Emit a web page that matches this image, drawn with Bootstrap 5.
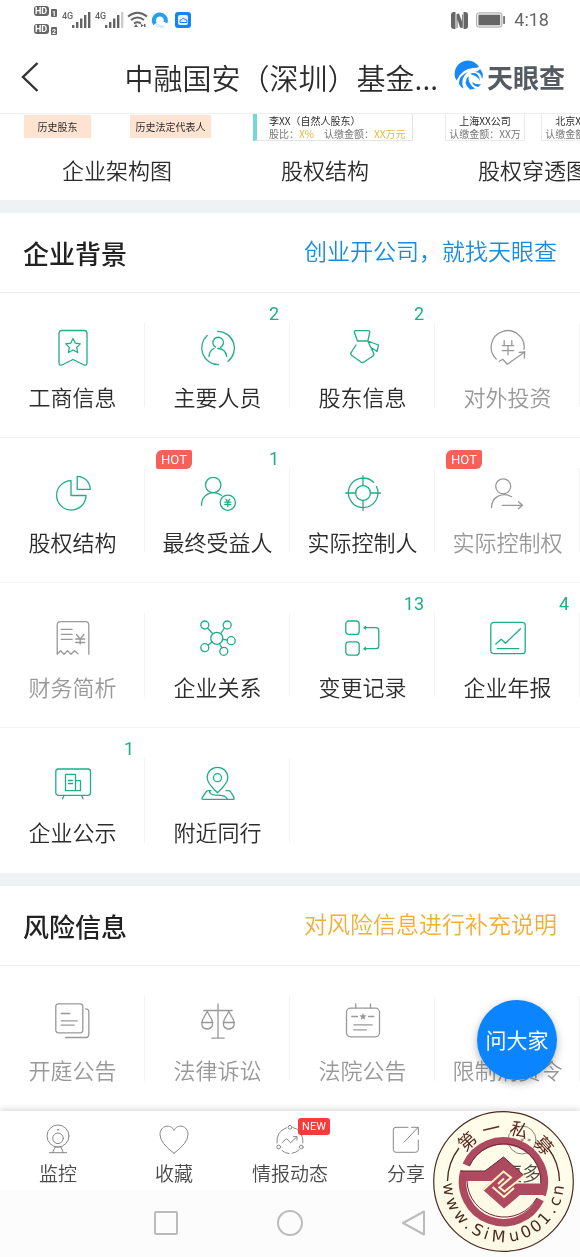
<!DOCTYPE html>
<html lang="zh-CN">
<head>
<meta charset="utf-8">
<meta name="viewport" content="width=device-width, initial-scale=1">
<title>天眼查 - 中融国安（深圳）基金</title>
<link href="https://cdn.jsdelivr.net/npm/bootstrap@5.3.0/dist/css/bootstrap.min.css" rel="stylesheet">
<style>
  body { font-family: "Noto Sans CJK SC", "Noto Sans", sans-serif; font-weight: 350; color: #2c2c2c; background: #fff; overflow-x: hidden; }
  a { color: inherit; text-decoration: none; }
  svg { display: block; flex: none; overflow: visible; }
  .ln { fill: none; stroke: currentColor; stroke-width: 1.3; stroke-linecap: round; stroke-linejoin: round; }
  .thin { stroke-width: 1; }
  .status-bar { height: 40px; padding: 0 31px 0 32px; color: #666; font-family: Roboto, sans-serif; }
  .clock { font-size: 18px; line-height: 24px; font-weight: 400; }
  .app-bar { height: 73px; padding: 0 15px 0 18px; }
  .app-title { font-size: 29px; line-height: 40px; font-weight: 350; margin-right: 18px; }
  .brand-name { font-size: 26px; line-height: 36px; font-weight: 700; color: #555b63; }
  .peek { height: 87px; border-top: 1px solid #eee; padding-left: 13px; }
  .peek-item { flex: 0 0 208px; }
  .peek-art { height: 27px; font-size: 10px; line-height: 13px; font-weight: 400; white-space: nowrap; overflow: hidden; }
  .tags { padding: 1px 10px 0 11px; }
  .peek-tag { background: #fee3d3; line-height: 23px; height: 23px; text-align: center; }
  .tag-s { width: 67px; }
  .tag-l { width: 81px; }
  .holder { width: 160px; margin-left: 32px; border: 1px solid #e3e3e3; border-left: 4px solid #70d9d2; border-top: 0; padding-left: 12px; }
  .sub { color: #777; }
  .gold { color: #e4b83a; }
  .child { flex: 0 0 80px; border: 1px solid #eaeaea; border-top: 0; text-align: center; }
  .caption { font-size: 22px; line-height: 30px; margin-top: 13px; text-align: center; }
  .gap-bar { height: 13px; background: #eef2f5; }
  .sec-head { height: 80px; padding: 0 23px; border-bottom: 1px solid #eee; }
  .sec-head h2 { font-size: 26px; line-height: 36px; font-weight: 500; margin: 0; color: #222; }
  .sec-head a { font-size: 23px; line-height: 34px; padding-bottom: 6px; }
  .c-blue { color: #1a8ce0; }
  .c-amber { color: #f3ae35; }
  .tile { height: 145px; padding-top: 37px; color: #1eae88; border-bottom: 1px solid #f3f3f3; }
  .tile::after { content: ""; position: absolute; right: 0; top: 30px; bottom: 30px; border-right: 1px solid #f3f3f3; }
  .tile-name { font-size: 22px; line-height: 32px; margin-top: 14px; color: #2c2c2c; white-space: nowrap; }
  .tile.off, .tile.off .tile-name { color: #999; }
  .count { position: absolute; right: 11px; top: 9px; font: 400 18px/24px Roboto, sans-serif; }
  .hot { position: absolute; left: 11px; top: 12px; width: 36px; background: #f7605a; color: #fff; border-radius: 6px 2px; font: 400 13px/19px Roboto, sans-serif; text-align: center; }
  .last-row .tile { border-bottom: 0; }
  .ask { position: absolute; right: 23px; bottom: 31px; width: 80px; height: 80px; border: 0; padding: 0 0 2px; border-radius: 50%; background: #0a84ff; color: #fff; font-size: 21px; line-height: 30px; font-weight: 400; box-shadow: 0 3px 8px rgba(0,0,0,.3); }
  .tabs-bar { height: 79px; padding-top: 14px; background: #fff; box-shadow: 0 -2px 6px rgba(0,0,0,.14); }
  .tab { flex: 1 1 0; color: #888; }
  .tab-name { font-size: 19px; line-height: 28px; margin-top: 4px; color: #4a4a4a; white-space: nowrap; }
  .new { position: absolute; left: 50%; top: -7px; margin-left: 8px; width: 32px; background: #fb3b3b; color: #fff; border-radius: 3px; font: 400 11px/17px Roboto, sans-serif; text-align: center; }
  .sys-nav { height: 67px; padding-bottom: 2px; background: #fcfcfc; gap: 98px; color: #bbb; position: relative; }
  .sys-nav button { border: 0; background: none; padding: 0; color: inherit; }
  .seal, .seal-paper { position: absolute; right: 6px; top: 0; width: 141px; height: 141px; border-radius: 50%; pointer-events: none; }
  .seal-paper { background: #fffdea; mix-blend-mode: multiply; }
</style>
</head>
<body>
<svg width="0" height="0" class="position-absolute" aria-hidden="true">
  <defs>
    <g id="yen"><path d="M-3.8-7v5M3.8-7v5M-5.7-2H5.7M-5.7 3H5.7M0-2V7"/></g>
    <g id="yen-s"><path d="M-2-3.5l2 2.7 2-2.7M-3-.5h6M-3 1.8h6M0-.5v4.2"/></g>
  </defs>
</svg>

<div class="status-bar d-flex align-items-center justify-content-between">
  <svg width="162" height="30" viewBox="32 5 162 30" fill="#666" font-family="Roboto, sans-serif">
    <rect x="34" y="6" width="15" height="10" rx="3"/><rect x="34" y="24" width="15" height="10" rx="3"/>
    <g font-size="9" font-weight="700"><text x="35" y="14" fill="#fff">HD</text><text x="35" y="32" fill="#fff">HD</text></g>
    <rect x="51" y="9" width="6" height="8" rx="1"/><rect x="51" y="27" width="6" height="8" rx="1"/>
    <g font-size="7" font-weight="700"><text x="52" y="16" fill="#fff">1</text><text x="52" y="34" fill="#fff">2</text></g>
    <g font-size="9" font-weight="500"><text x="62" y="19">4G</text><text x="95" y="19">4G</text></g>
    <path d="M72 25h2.400v3H72zM76 22h2.400v6H76zM80 18.500h2.400V28H80zM84 15h2.400v13H84zM88 12h2.400v16H88z"/>
    <path d="M105 25h2.400v3H105zM109 22h2.400v6H109zM113 18.500h2.400V28H113zM117 15h2.400v13H117z"/><path fill="#ccc" d="M121 12h2.400v16H121z"/>
    <g fill="none" stroke="#666" stroke-width="2"><path d="M128 16.500q9.500-7.500 19 0M131 20q6.500-5 13 0M134 23.500q3.500-2.500 7 0"/></g><path d="M136 24l2 3h-4zM141 24l3 1.500-3 1.500zM144 24h1.500v3H144z"/>
    <path d="M155 24a6 6 0 1 1 10.500-1.500" fill="none" stroke="#259ff0" stroke-width="4"/><path d="M156 24q4 4 8 2" fill="none" stroke="#d8ecfa" stroke-width="3"/>
    <rect x="175" y="12" width="16" height="16" rx="3" fill="#1684f4"/><rect x="178" y="15" width="10" height="10" rx="2" fill="#e4f4ff"/><path d="M180 22.500q-1-3 2-3 1-3 3 0 3 0 2 3z" fill="none" stroke="#1684f4"/>
  </svg>
  <div class="d-flex align-items-center gap-2">
    <svg width="17" height="17" viewBox="0 0 17 17"><path fill="#666" d="M3 0h1.500v17H3q-3 0-3-3V3q0-3 3-3zM12.500 0H14q3 0 3 3v11q0 3-3 3h-1.500zM5.500 2L8 1.500l3 8V2.500l.8 0V16L9 15.500l-2.500-8V16l-1 0z"/></svg>
    <svg width="30" height="16" viewBox="0 0 31 16"><rect x=".7" y=".7" width="26" height="14.600" rx="2" fill="none" stroke="#999"/><rect x="2.500" y="2.500" width="22.500" height="11" fill="#666"/><path fill="#777" d="M28 4h2v8h-2z"/></svg>
    <span class="clock">4:18</span>
  </div>
</div>

<header class="app-bar d-flex align-items-center justify-content-between">
  <a href="#" aria-label="返回"><svg width="24" height="32" viewBox="0 0 24 32"><path d="M19.500 2L5 16l14.500 14" fill="none" stroke="#333" stroke-width="2.400"/></svg></a>
  <div class="d-flex align-items-center">
    <h1 class="app-title mb-0 text-nowrap">中融国安（深圳）基金...</h1>
    <a href="#" class="d-flex align-items-center gap-1">
      <svg width="27" height="27" viewBox="0 0 27 27"><path fill="#1789f7" d="M23 4A13 13 0 0 0 .5 17.500Q6 5.500 17 5q4 0 6-1zM12 9Q2 13 3 21q1.500 3 4.500 4.500Q3.500 15 12 9zM12.500 13Q6 20 14 26.500q3 0 5-1-7-4-6.500-12.500zM16 19q1 4 6 5 2-1 3-3-5 1-9-2zM18 9q7-1 8 7 1-1 .8-5-.8-3-2.800-5-2 3-6 3zM14 11q4-2 7 0 3 3 3 7-2-5-10-7z"/></svg>
      <span class="brand-name">天眼查</span>
    </a>
  </div>
</header>

<section class="peek d-flex overflow-hidden">
  <a href="#" class="peek-item">
    <div class="peek-art tags d-flex justify-content-between"><span class="peek-tag tag-s">历史股东</span><span class="peek-tag tag-l">历史法定代表人</span></div>
    <div class="caption">企业架构图</div>
  </a>
  <a href="#" class="peek-item">
    <div class="peek-art"><div class="holder"><div>李XX（自然人股东）</div><div class="sub">股比：<span class="gold">X%</span>&emsp;认缴金额：<span class="gold">XX万元</span></div></div></div>
    <div class="caption">股权结构</div>
  </a>
  <a href="#" class="peek-item">
    <div class="peek-art d-flex ps-3 gap-3"><div class="child"><div>上海XX公司</div><div class="sub">认缴金额：XX万</div></div><div class="child"><div>北京XX公司</div><div class="sub">认缴金额：XX万</div></div></div>
    <div class="caption">股权穿透图</div>
  </a>
</section>

<div class="gap-bar"></div>

<section>
  <div class="sec-head d-flex align-items-center justify-content-between"><h2>企业背景</h2><a href="#" class="c-blue">创业开公司，就找天眼查</a></div>
  <div class="row row-cols-4 g-0">
    <a href="#" class="tile col position-relative d-flex flex-column align-items-center">
      <svg class="ln" width="36" height="36"><path d="M4 3.500q0-3 3-3h22q3 0 3 3v29q0 3.500-3 2.500l-11-5.500L7 35q-3 1-3-2.500zM18 8.500l2.300 4.700 5 .7-3.600 3.500.9 5.100L18 20l-4.600 2.500.9-5.100-3.600-3.500 5-.7z"/></svg>
      <span class="tile-name">工商信息</span></a>
    <a href="#" class="tile col position-relative d-flex flex-column align-items-center">
      <svg class="ln" width="36" height="36"><path d="M17.500 1.300A16.800 16.800 0 0 1 28 31.300M18.500 34.700A16.800 16.800 0 0 1 7.200 5.500M20.500 17.300a5.300 5.300 0 1 0-5-.2M9 26.500q.5-6 5-8M26.800 26.500q-1.500-8-9-8"/></svg>
      <span class="tile-name">主要人员</span><span class="count">2</span></a>
    <a href="#" class="tile col position-relative d-flex flex-column align-items-center">
      <svg class="ln" width="36" height="36"><path d="M10.500.7h13q1.500 0 1.300 1.500l-2 8.800H12.500L9.300 2.200Q9 .7 10.500.7zM11 15l-4.500 7q-1.500 2 0 3.300l9.500 6.700q1.500 1 3 0l9-6q1.500-1 .5-3L22.800 11l10.700 4-1.500 6.500-6-4"/></svg>
      <span class="tile-name">股东信息</span><span class="count">2</span></a>
    <a href="#" class="tile off col position-relative d-flex flex-column align-items-center">
      <svg class="ln" width="36" height="36"><path d="M6.200 29A16.500 16.500 0 1 1 34 19.500M9.200 31.300l3.600-2 4.400 5L34.800 22M29 22.300l5.800-.3-.6 6"/><use href="#yen" x="18" y="17.700"/></svg>
      <span class="tile-name">对外投资</span></a>
    <a href="#" class="tile col position-relative d-flex flex-column align-items-center">
      <svg class="ln" width="36" height="36"><path d="M16 5.700v14.800h15A14.700 14.700 0 1 1 16 5.700zM22.200 1.300v13h13a13 13 0 0 0-13-13z"/></svg>
      <span class="tile-name">股权结构</span></a>
    <a href="#" class="tile col position-relative d-flex flex-column align-items-center">
      <svg class="ln" width="36" height="36"><circle cx="13.200" cy="10" r="7.700"/><path d="M1.500 30.300c0-11 11-16 20-10"/><circle cx="27.800" cy="27.700" r="7.600"/><use href="#yen-s" x="27.800" y="27.700"/></svg>
      <span class="tile-name">最终受益人</span><span class="hot">HOT</span><span class="count">1</span></a>
    <a href="#" class="tile col position-relative d-flex flex-column align-items-center">
      <svg class="ln" width="36" height="36"><path d="M28.500 7.300A14.800 14.800 0 1 0 31.500 11.500M18 .7v10M18 25.500v10M.7 18h10M25.500 18h10"/><circle cx="18" cy="18" r="7.400"/></svg>
      <span class="tile-name">实际控制人</span></a>
    <a href="#" class="tile off col position-relative d-flex flex-column align-items-center">
      <svg class="ln" width="36" height="36"><circle cx="13.200" cy="11.300" r="7.500"/><path d="M1.500 32.700c0-11 11-16 20-11M12.200 30.300h20M28.500 26.800l4 3.500-4 3.500"/></svg>
      <span class="tile-name">实际控制权</span><span class="hot">HOT</span></a>
    <a href="#" class="tile off col position-relative d-flex flex-column align-items-center">
      <svg class="ln" width="36" height="36"><path d="M33.800 34.300V5q0-3.300-3.300-3.300h-25Q2.200 1.700 2.200 5v29.300l3.300-3.500 3.500 3.500 3.500-3.500 3.500 3.500 3.500-3.500 3.500 3M6.200 9.300h11M6.200 14.300h11M6.200 19.300h11M21.500 14.500l3.700 4.500 3.700-4.500M20.700 19h9M20.700 22.500h9M25.200 19v5"/></svg>
      <span class="tile-name">财务简析</span></a>
    <a href="#" class="tile col position-relative d-flex flex-column align-items-center">
      <svg class="ln" width="36" height="36"><circle cx="16.800" cy="18.300" r="6"/><circle cx="4.800" cy="5" r="4"/><circle cx="27.200" cy="5" r="4"/><circle cx="31.200" cy="20.700" r="4"/><circle cx="23.800" cy="31.300" r="4"/><circle cx="4.800" cy="27.700" r="4"/><path d="M7.500 8l5.300 5.800M24.500 8l-3.800 5.500M22.700 19.300l4.500.7M19.500 23.700l2.400 4.200M12 22l-4 3.200"/></svg>
      <span class="tile-name">企业关系</span></a>
    <a href="#" class="tile col position-relative d-flex flex-column align-items-center">
      <svg class="ln" width="36" height="36"><rect x=".8" y="1" width="13.400" height="13.400" rx="3"/><rect x=".8" y="21.800" width="13.400" height="13.400" rx="3"/><path d="M19 7.700h11.800q3 0 3 3v15q0 3-3 3H19M20.500 6.500v2.400L19 7.700zM20.500 27.500v2.400L19 28.700z"/></svg>
      <span class="tile-name">变更记录</span><span class="count">13</span></a>
    <a href="#" class="tile col position-relative d-flex flex-column align-items-center">
      <svg class="ln" width="36" height="36"><rect x=".8" y="2.300" width="34.400" height="31.400" rx="3"/><path d="M5.800 24l5.400-4.700 4.300 4 15-14.600M7.200 28.700h21.600"/></svg>
      <span class="tile-name">企业年报</span><span class="count">4</span></a>
  </div>
  <div class="row row-cols-4 g-0 last-row">
    <a href="#" class="tile col position-relative d-flex flex-column align-items-center">
      <svg class="ln" width="36" height="36"><rect x=".8" y="4" width="34.700" height="26.300" rx="2.500"/><path d="M9 30.500l-1.500 3.300M26.500 30.500l1.500 3.300M10.500 25.700V9.300h10v16.400zM20.500 15.700h5v10h-5zM13.500 15.500h4M13.500 18.500h4"/></svg>
      <span class="tile-name">企业公示</span><span class="count">1</span></a>
    <a href="#" class="tile col position-relative d-flex flex-column align-items-center">
      <svg class="ln" width="36" height="36"><path d="M17.500 27.700Q7.200 18.500 7.200 12.600a10.300 10.300 0 0 1 20.600 0q0 5.900-10.300 15.100zM11 25.700H8.500q-2 0-3 2l-3.200 5q-1 1.700 1 1.700h29.500q2 0 1-2l-2.500-4.700q-1-2-3-2H26M9.500 25.700q0 4 6 4.500 10-.5 12 4"/><circle cx="17.500" cy="12.700" r="4"/></svg>
      <span class="tile-name">附近同行</span></a>
  </div>
</section>

<div class="gap-bar"></div>

<section class="position-relative">
  <div class="sec-head d-flex align-items-center justify-content-between"><h2>风险信息</h2><a href="#" class="c-amber">对风险信息进行补充说明</a></div>
  <div class="row row-cols-4 g-0 last-row">
    <a href="#" class="tile off col position-relative d-flex flex-column align-items-center">
      <svg class="ln" width="36" height="36"><rect x=".8" y=".8" width="27" height="29" rx="2.500"/><path d="M30.500 5.800q3.300 0 3.300 3v22.700q0 3-3 3H10.500M6.200 10.500h8.600M6.200 17.800h16M6.200 22.200h13"/></svg>
      <span class="tile-name">开庭公告</span></a>
    <a href="#" class="tile off col position-relative d-flex flex-column align-items-center">
      <svg class="ln" width="36" height="36"><path d="M18 .8v34.400M3.800 7.500h28.400M11.800 35.200h12.400M7.200 8.500l-4.500 8Q-.2 25.500 7.200 26q7.400-.5 4.500-9.500zM1.500 19.500h11.400M28.800 8.500l-4.500 8q-2.900 9 4.500 9.500 7.400-.5 4.500-9.500zM23.200 19.500h11.400"/></svg>
      <span class="tile-name">法律诉讼</span></a>
    <a href="#" class="tile off col position-relative d-flex flex-column align-items-center">
      <svg class="ln" width="36" height="36"><rect x="1.500" y="5.200" width="33" height="28.600" rx="4"/><path d="M10.800.8V5M25.500.8V5M6.800 13.500h5.700M23.500 13.500h5.300M8.800 21.800h18.400M8.800 26.800h12.700"/><path fill="currentColor" stroke="none" d="M18 10l1 2.300 2.600.2-2 1.700.7 2.600-2.300-1.400-2.300 1.400.7-2.600-2-1.700 2.600-.2z"/></svg>
      <span class="tile-name">法院公告</span></a>
    <a href="#" class="tile off col position-relative d-flex flex-column align-items-center">
      <svg class="ln" width="36" height="36"><circle cx="18" cy="18" r="14"/><path d="M8 28L28 8"/></svg>
      <span class="tile-name">限制消费令</span></a>
  </div>
  <button type="button" class="ask">问大家</button>
</section>

<footer class="position-relative">
  <nav class="tabs-bar d-flex position-relative">
    <a href="#" class="tab position-relative d-flex flex-column align-items-center">
      <svg class="ln thin" width="30" height="30"><circle cx="15" cy="11" r="11"/><circle cx="15" cy="13.300" r="5.300"/><circle cx="15" cy="4.700" r=".6"/><path d="M12 22l-2.300 5.700M18 22l2.300 5.700M12 22h6M6.300 27.700h17.400"/></svg>
      <span class="tab-name">监控</span></a>
    <a href="#" class="tab position-relative d-flex flex-column align-items-center">
      <svg class="ln thin" width="30" height="30"><path d="M15 28.300Q1 18 1 9.500C1 0 12-1.500 15 5.500 18-1.500 29 0 29 9.500q0 8.500-14 18.800z"/></svg>
      <span class="tab-name">收藏</span></a>
    <a href="#" class="tab position-relative d-flex flex-column align-items-center">
      <svg class="ln thin" width="30" height="30"><circle cx="15" cy="2.300" r="1.900"/><circle cx="3.700" cy="22" r="1.900"/><circle cx="26.300" cy="22" r="1.900"/><path d="M11.500 2.700Q1 6.500 2 18M18.500 2.700Q22 3.500 24 6M25 8q3.500 4 2.800 10M7 25.500q3 3 7 3M17 28.300q4-.5 7-3.300M7 17.700l4.500-4 4 4 6-5.500M18.500 11.700l3.500-.2v3.500"/></svg>
      <span class="tab-name">情报动态</span><span class="new">NEW</span></a>
    <a href="#" class="tab position-relative d-flex flex-column align-items-center">
      <svg class="ln thin" width="30" height="30"><path d="M17 2.300H5Q2.300 2.300 2.300 5v19.500q0 2.800 2.700 2.800h19.500q2.800 0 2.800-2.800V15M13 17.300L27 2.500M20.500 2.300h6.800v7.200"/></svg>
      <span class="tab-name">分享</span></a>
    <a href="#" class="tab position-relative d-flex flex-column align-items-center">
      <svg class="ln thin" width="30" height="30"><circle cx="15" cy="15" r="14"/><circle cx="8" cy="15" r="1"/><circle cx="15" cy="15" r="1"/><circle cx="22" cy="15" r="1"/></svg>
      <span class="tab-name">更多</span></a>
  </nav>
  <div class="sys-nav d-flex align-items-center justify-content-center">
    <button type="button" aria-label="最近任务"><svg width="26" height="26" fill="none" stroke="currentColor" stroke-width="2"><rect x="2" y="2" width="22" height="22" rx="1"/></svg></button>
    <button type="button" aria-label="主页"><svg width="26" height="26" fill="none" stroke="currentColor" stroke-width="2"><circle cx="13" cy="13" r="12"/></svg></button>
    <button type="button" aria-label="返回"><svg width="26" height="26" fill="none" stroke="currentColor" stroke-width="2" stroke-linejoin="round"><path d="M23 1.500v23L2 13z"/></svg></button>
  </div>
  <div class="seal-paper"></div>
  <svg class="seal" viewBox="0 0 141 141">
    <g fill="none" stroke="#4b2a22"><circle cx="70.500" cy="70.500" r="69.800" stroke-width="1.200"/><path d="M14.500 70A56 56 0 0 1 26 37M126.500 70A56 56 0 0 0 115 37" stroke-width="1.300"/></g>
    <g fill="#5e2b22" font-size="18" font-weight="400" text-anchor="middle" font-family="Noto Sans CJK SC, sans-serif">
      <text x="70.500" y="23" transform="rotate(-42 70.500 70.500)">第</text>
      <text x="70.500" y="23" transform="rotate(-13 70.500 70.500)">一</text>
      <text x="70.500" y="23" transform="rotate(17 70.500 70.500)">私</text>
      <text x="70.500" y="23" transform="rotate(48 70.500 70.500)">募</text>
    </g>
    <g fill="#4b2a22" font-size="16" text-anchor="middle" font-family="DejaVu Sans, sans-serif" font-weight="400">
      <text x="70.500" y="131" transform="rotate(82 70.500 70.500)">w</text>
      <text x="70.500" y="131" transform="rotate(66 70.500 70.500)">w</text>
      <text x="70.500" y="131" transform="rotate(50 70.500 70.500)">w</text>
      <text x="70.500" y="131" transform="rotate(39 70.500 70.500)">.</text>
      <text x="70.500" y="131" transform="rotate(28 70.500 70.500)">S</text>
      <text x="70.500" y="131" transform="rotate(18 70.500 70.500)">i</text>
      <text x="70.500" y="131" transform="rotate(5 70.500 70.500)">M</text>
      <text x="70.500" y="131" transform="rotate(-11 70.500 70.500)">u</text>
      <text x="70.500" y="131" transform="rotate(-24 70.500 70.500)">0</text>
      <text x="70.500" y="131" transform="rotate(-36 70.500 70.500)">0</text>
      <text x="70.500" y="131" transform="rotate(-48 70.500 70.500)">1</text>
      <text x="70.500" y="131" transform="rotate(-59 70.500 70.500)">.</text>
      <text x="70.500" y="131" transform="rotate(-69 70.500 70.500)">c</text>
      <text x="70.500" y="131" transform="rotate(-81 70.500 70.500)">n</text>
    </g>
    <g fill="none" stroke="#ad4a60" stroke-width="7.500">
      <path d="M33 54A41 41 0 0 1 109.200 84M30.900 60A41 41 0 0 0 107.400 88.500"/>
    </g>
    <g fill="none" stroke="#6d2638" stroke-width="1"><path d="M36.500 55A37.300 37.300 0 0 1 107.800 72.500M34 70A37.300 37.300 0 0 0 103.800 87"/></g>
    <path d="M27.500 60H52L70.500 46 91.500 65 82 72.500H114.500L112.500 84H87L71 97.500 49.500 78.500 58.500 70H27.500z" fill="#ad4a60"/>
    <path d="M28 60H52L70.500 46 91.500 65" fill="none" stroke="#6d2638"/>
    <path d="M50 79L70.500 60.500 78 66.500 66.500 76.500 71.500 80.500 91.500 64.500M59.500 76L71 86 81 77M65 73l6-5.500" fill="none" stroke="#fff5c4" stroke-width="2"/>
  </svg>
</footer>
<script src="https://cdn.jsdelivr.net/npm/bootstrap@5.3.0/dist/js/bootstrap.bundle.min.js"></script>
</body>
</html>
